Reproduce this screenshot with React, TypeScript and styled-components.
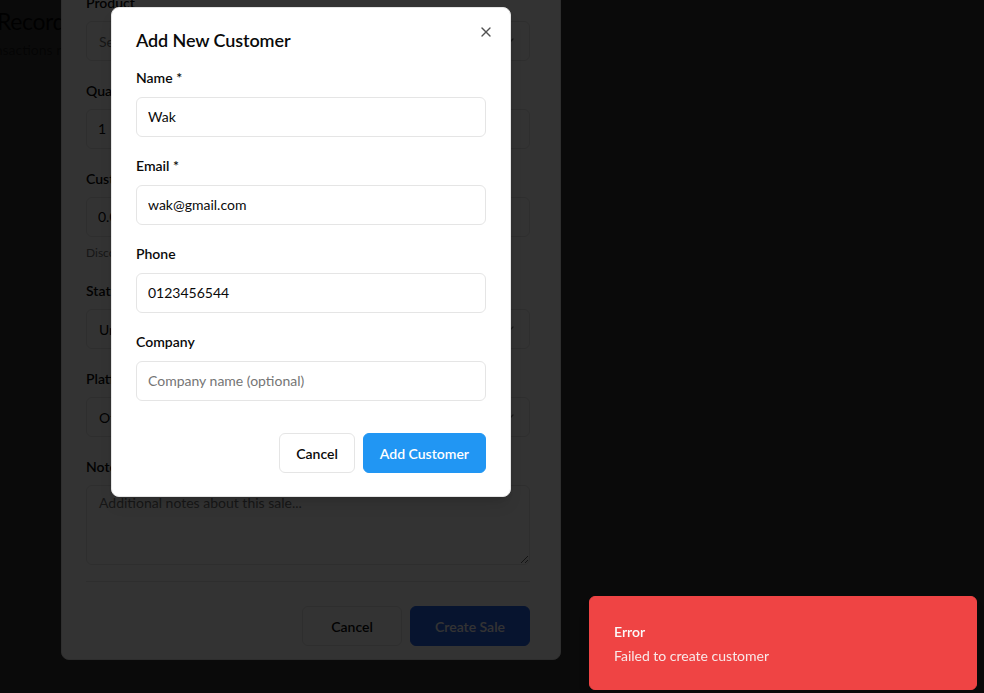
import React from "react";
import styled, { createGlobalStyle } from "styled-components";
import { X, ChevronDown } from "lucide-react";

const FONT = `"Segoe UI", Lato, "Noto Sans", sans-serif`;

const GlobalStyle = createGlobalStyle`
  html, body { margin: 0; padding: 0; background: #ffffff; }
  body { font-family: ${FONT}; color: #0a0a0a; overflow: hidden; }
  *, *::before, *::after { box-sizing: border-box; }
`;

/* ---------- page behind everything ---------- */
const Page = styled.main`
  min-height: 100vh;
  padding-top: 5px;
  overflow: hidden;
`;
const PageTitle = styled.h1`
  margin: 0 0 0 -3px;
  font-size: 23px;
  line-height: 32px;
  font-weight: 400;
  letter-spacing: -0.4px;
  white-space: nowrap;
`;
const PageSubtitle = styled.p`
  margin: 3px 0 0 -24px;
  font-size: 14px;
  line-height: 20px;
  color: #737373;
  white-space: nowrap;
`;

/* ---------- overlays ---------- */
const Layer = styled.div<{ $align: "flex-start" | "flex-end"; $pad: string }>`
  position: fixed;
  inset: 0;
  background: rgba(0, 0, 0, 0.8);
  display: flex;
  align-items: ${(p) => p.$align};
  padding: ${(p) => p.$pad};
  overflow: hidden;
`;

/* ---------- shared form parts ---------- */
const Field = styled.div`
  display: flex;
  flex-direction: column;
`;
const Label = styled.label<{ $gap?: number }>`
  font-size: 14px;
  line-height: 20px;
  font-weight: 600;
  color: #0a0a0a;
  margin-bottom: ${(p) => p.$gap ?? 8}px;
`;
const Input = styled.input`
  height: 40px;
  width: 100%;
  border: 1px solid #e5e5e5;
  border-radius: 6px;
  padding: 0 11px 1px;
  font-family: ${FONT};
  font-size: 14px;
  color: #0a0a0a;
  background: #ffffff;
  outline: none;
  &::placeholder { color: #757575; }
`;
const SelectBox = styled.div<{ $placeholder?: boolean }>`
  height: 40px;
  border: 1px solid #e5e5e5;
  border-radius: 6px;
  padding: 0 12px;
  display: flex;
  align-items: center;
  justify-content: space-between;
  font-size: 14px;
  color: ${(p) => (p.$placeholder ? "#737373" : "#0a0a0a")};
  svg { opacity: 0.5; color: #0a0a0a; }
`;
const TextArea = styled.textarea`
  height: 80px;
  width: 100%;
  border: 1px solid #e5e5e5;
  border-radius: 6px;
  padding: 8px 12px;
  font-family: ${FONT};
  font-size: 14px;
  resize: vertical;
  outline: none;
  &::placeholder { color: #737373; }
`;
const Helper = styled.p`
  margin: 8px 0 0;
  font-size: 12px;
  line-height: 16px;
  color: #737373;
`;
const Button = styled.button<{ $variant: "outline" | "primary" | "navy"; $min?: number }>`
  height: 40px;
  padding: 0 16px;
  min-width: ${(p) => p.$min ?? 0}px;
  border-radius: 6px;
  font-family: ${FONT};
  font-size: 14px;
  font-weight: 600;
  cursor: pointer;
  border: 1px solid
    ${(p) => (p.$variant === "outline" ? "#e5e5e5" : p.$variant === "primary" ? "#2196f3" : "#2563eb")};
  background: ${(p) => (p.$variant === "outline" ? "#ffffff" : p.$variant === "primary" ? "#2196f3" : "#2563eb")};
  color: ${(p) => (p.$variant === "outline" ? "#0a0a0a" : "#ffffff")};
`;
const Actions = styled.div<{ $top: number }>`
  display: flex;
  justify-content: flex-end;
  gap: 8px;
  margin-top: ${(p) => p.$top}px;
`;

/* ---------- sale dialog (underneath) ---------- */
const SaleDialog = styled.section`
  width: 500px;
  flex-shrink: 0;
  background: #ffffff;
  border: 1px solid #e5e5e5;
  border-radius: 8px;
  padding: 24px 30px 13px 24px;
  display: flex;
  flex-direction: column;
`;
const SaleHeader = styled.div`
  margin-bottom: 20px;
`;
const SaleTitle = styled.h2`
  margin: 0;
  font-size: 18px;
  line-height: 24px;
  font-weight: 600;
`;
const SaleForm = styled.div`
  display: flex;
  flex-direction: column;
  gap: 20px;
`;
const Divider = styled.hr`
  margin: 16px 0 0;
  border: none;
  border-top: 1px solid #e5e5e5;
  height: 0;
`;

/* ---------- customer dialog (on top) ---------- */
const CustomerDialog = styled.section`
  position: relative;
  width: 400px;
  flex-shrink: 0;
  background: #ffffff;
  border: 1px solid #e5e5e5;
  border-radius: 8px;
  padding: 20px 24px 23px;
  box-shadow: 0 10px 15px -3px rgba(0, 0, 0, 0.1), 0 4px 6px -4px rgba(0, 0, 0, 0.1);
`;
const CustomerTitle = styled.h2`
  margin: 0 0 16px;
  font-size: 18px;
  line-height: 24px;
  font-weight: 600;
  letter-spacing: -0.1px;
`;
const CustomerForm = styled.div`
  display: flex;
  flex-direction: column;
  gap: 19px;
`;
const CloseButton = styled.button`
  position: absolute;
  top: 16px;
  right: 16px;
  width: 16px;
  height: 16px;
  padding: 0;
  border: none;
  background: none;
  color: #0a0a0a;
  opacity: 0.7;
  display: flex;
  cursor: pointer;
`;

/* ---------- toast ---------- */
const Toast = styled.div`
  position: fixed;
  right: 7px;
  bottom: 3px;
  width: 388px;
  background: #ef4444;
  border: 1px solid #ef4444;
  border-radius: 6px;
  padding: 25px 24px 23px;
  color: #fafafa;
  box-shadow: 0 10px 15px -3px rgba(0, 0, 0, 0.1);
`;
const ToastTitle = styled.div`
  font-size: 14px;
  line-height: 20px;
  font-weight: 600;
`;
const ToastText = styled.div`
  margin-top: 4px;
  font-size: 14px;
  line-height: 20px;
  opacity: 0.9;
`;

export default function App() {
  return (
    <>
      <GlobalStyle />
      <Page>
        <PageTitle>Record Sale</PageTitle>
        <PageSubtitle>Transactions recorded for your store</PageSubtitle>
      </Page>

      <Layer $align="flex-end" $pad="0 0 33px 61px">
        <SaleDialog>
          <SaleHeader>
            <SaleTitle>Record New Sale</SaleTitle>
          </SaleHeader>
          <SaleForm>
            <Field>
              <Label>Product</Label>
              <SelectBox $placeholder>
                Select a product
                <ChevronDown size={16} />
              </SelectBox>
            </Field>
            <Field>
              <Label>Quantity</Label>
              <Input defaultValue="1" />
            </Field>
            <Field>
              <Label>Customer Discount (%)</Label>
              <Input defaultValue="0.00" />
              <Helper>Discount applied to the total amount</Helper>
            </Field>
            <Field>
              <Label>Status</Label>
              <SelectBox>
                Unpaid
                <ChevronDown size={16} />
              </SelectBox>
            </Field>
            <Field>
              <Label>Platform</Label>
              <SelectBox>
                Other
                <ChevronDown size={16} />
              </SelectBox>
            </Field>
            <Field>
              <Label>Notes</Label>
              <TextArea placeholder="Additional notes about this sale..." />
            </Field>
          </SaleForm>
          <Divider />
          <Actions $top={24}>
            <Button $variant="outline" $min={100}>Cancel</Button>
            <Button $variant="navy" $min={120}>Create Sale</Button>
          </Actions>
        </SaleDialog>
      </Layer>

      <Layer $align="flex-start" $pad="7px 0 0 111px">
        <CustomerDialog>
          <CloseButton aria-label="Close">
            <X size={16} />
          </CloseButton>
          <CustomerTitle>Add New Customer</CustomerTitle>
          <CustomerForm>
            <Field>
              <Label $gap={9}>Name *</Label>
              <Input defaultValue="Wak" />
            </Field>
            <Field>
              <Label $gap={9}>Email *</Label>
              <Input defaultValue="wak@gmail.com" />
            </Field>
            <Field>
              <Label $gap={9}>Phone</Label>
              <Input defaultValue="0123456544" />
            </Field>
            <Field>
              <Label $gap={9}>Company</Label>
              <Input placeholder="Company name (optional)" />
            </Field>
          </CustomerForm>
          <Actions $top={32}>
            <Button $variant="outline">Cancel</Button>
            <Button $variant="primary">Add Customer</Button>
          </Actions>
        </CustomerDialog>
      </Layer>

      <Toast>
        <ToastTitle>Error</ToastTitle>
        <ToastText>Failed to create customer</ToastText>
      </Toast>
    </>
  );
}
